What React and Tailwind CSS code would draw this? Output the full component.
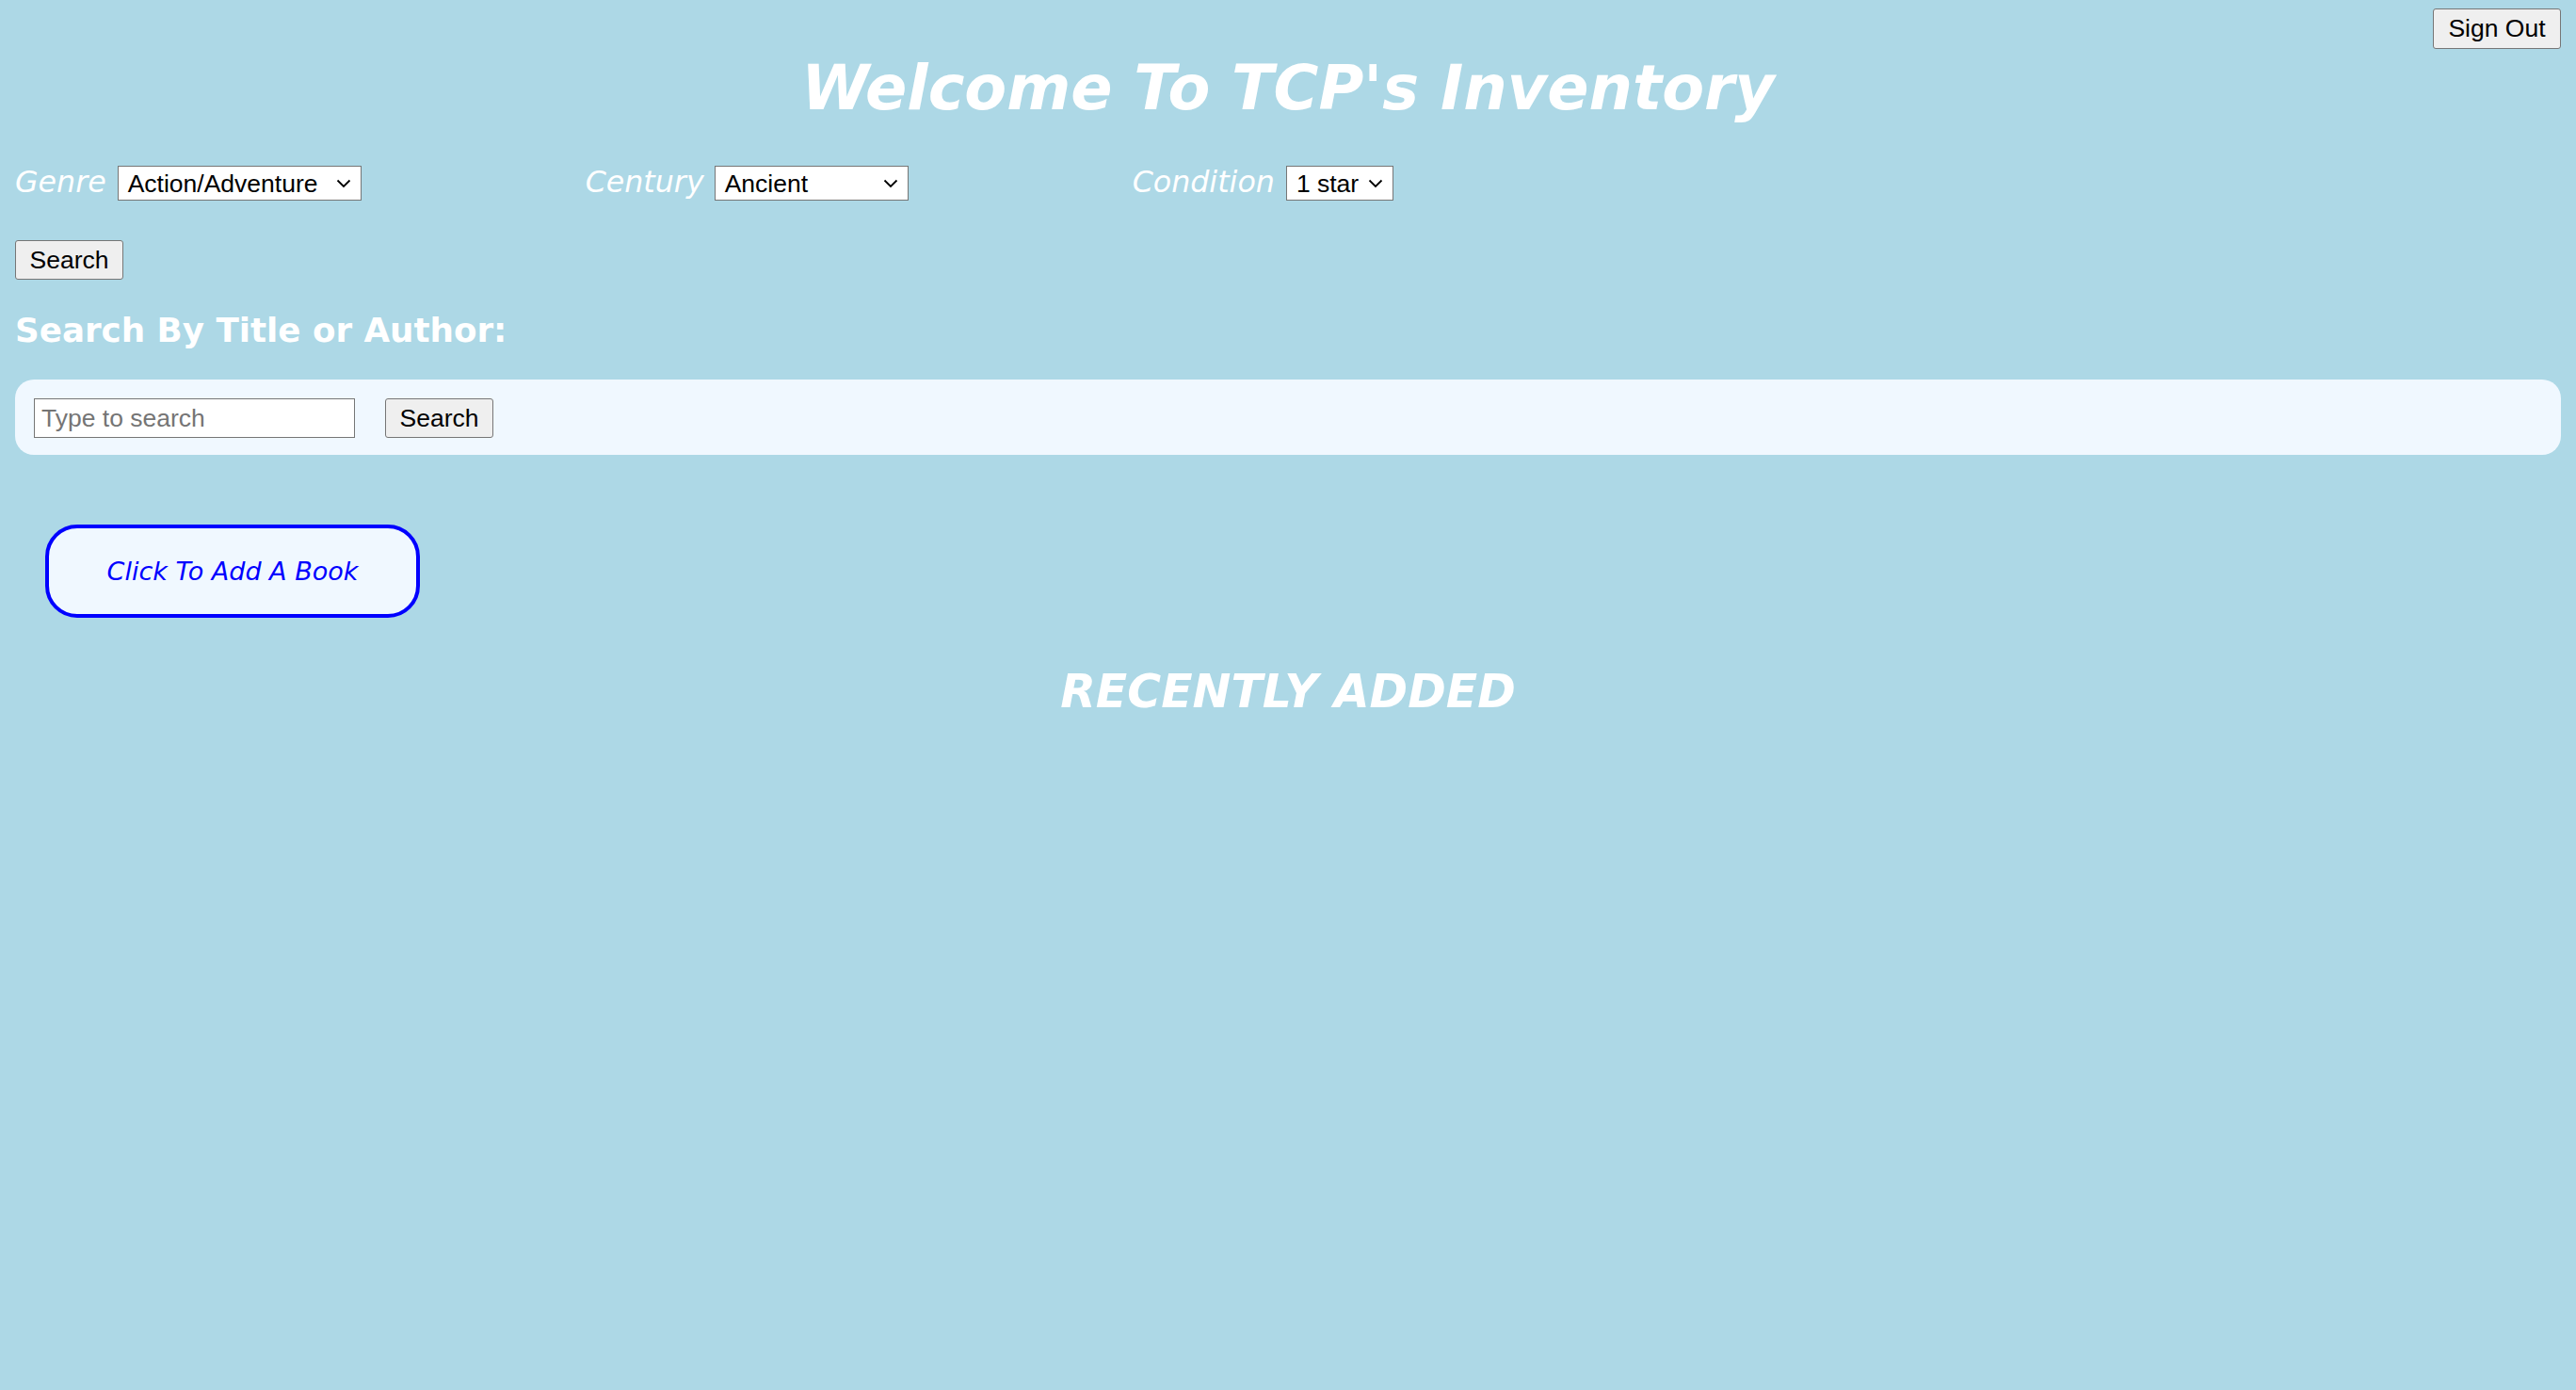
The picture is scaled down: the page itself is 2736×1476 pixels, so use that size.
import React from "react";

function Chevron() {
  return (
    <svg width="16" height="10" viewBox="0 0 16 10" className="shrink-0">
      <polyline points="1.5,1.5 8,8 14.5,1.5" fill="none" stroke="#000" strokeWidth="1.8" />
    </svg>
  );
}

function FakeSelect({ value, width }) {
  return (
    <div
      className="flex items-center justify-between h-[37px] bg-white border border-[#767676] pl-[10px] pr-[10px] font-['Liberation_Sans',Arial,sans-serif] text-[26.5px] leading-none text-black"
      style={{ width }}
    >
      <span className="not-italic">{value}</span>
      <Chevron />
    </div>
  );
}

function GrayButton({ children, w }) {
  return (
    <button
      className={`h-[42px] ${w} bg-[#efefef] border border-[#767676] rounded-[3px] font-['Liberation_Sans',Arial,sans-serif] text-[26.5px] leading-none text-black flex items-center justify-center`}
    >
      {children}
    </button>
  );
}

export default function App() {
  return (
    <div className="min-h-[1476px] w-full bg-[#ADD8E6] font-['DejaVu_Sans',Verdana,sans-serif]">
      <div className="flex justify-end pt-[9px] pr-[16px]">
        <button className="h-[43px] w-[136px] bg-[#efefef] border border-[#767676] rounded-[3px] font-['Liberation_Sans',Arial,sans-serif] text-[26.5px] leading-none text-black flex items-center justify-center">
          Sign Out
        </button>
      </div>

      <h1 className="mt-[9px] text-center text-white italic font-bold text-[65.3px] leading-none">
        Welcome To TCP's Inventory
      </h1>

      <div className="mt-[50px] pl-[16px] flex items-baseline gap-[238px]">
        <div className="flex items-baseline">
          <span className="text-white italic text-[31.7px] leading-none">Genre</span>
          <div className="ml-[12px]">
            <FakeSelect value="Action/Adventure" width="259px" />
          </div>
        </div>
        <div className="flex items-baseline">
          <span className="text-white italic text-[31.7px] leading-none">Century</span>
          <div className="ml-[11px]">
            <FakeSelect value="Ancient" width="206px" />
          </div>
        </div>
        <div className="flex items-baseline">
          <span className="text-white italic text-[31.7px] leading-none">Condition</span>
          <div className="ml-[12px]">
            <FakeSelect value="1 star" width="114px" />
          </div>
        </div>
      </div>

      <div className="mt-[42px] pl-[16px]">
        <GrayButton w="w-[115px]">Search</GrayButton>
      </div>

      <h2 className="mt-[36px] pl-[16px] text-white font-bold text-[35.7px] leading-none">
        Search By Title or Author:
      </h2>

      <div className="mt-[34px] mx-[16px] h-[80px] rounded-[20px] bg-[#F0F8FF] flex items-start pt-[20px] pl-[20px] gap-[32px]">
        <input
          type="text"
          placeholder="Type to search"
          className="w-[341px] h-[42px] bg-white border border-[#767676] pl-[7px] font-['Liberation_Sans',Arial,sans-serif] text-[26.5px] leading-none text-black placeholder:text-[#757575] outline-none"
        />
        <GrayButton w="w-[115px]">Search</GrayButton>
      </div>

      <div className="mt-[74px] ml-[48px]">
        <button className="w-[398px] h-[99px] border-[4px] border-[#0000FF] rounded-[34px] bg-[#F0F8FF] text-[#0000FF] italic text-[27px] leading-none flex items-center justify-center">
          Click To Add A Book
        </button>
      </div>

      <h2 className="mt-[55px] text-center text-white italic font-bold text-[48.9px] leading-none">
        RECENTLY ADDED
      </h2>
    </div>
  );
}
